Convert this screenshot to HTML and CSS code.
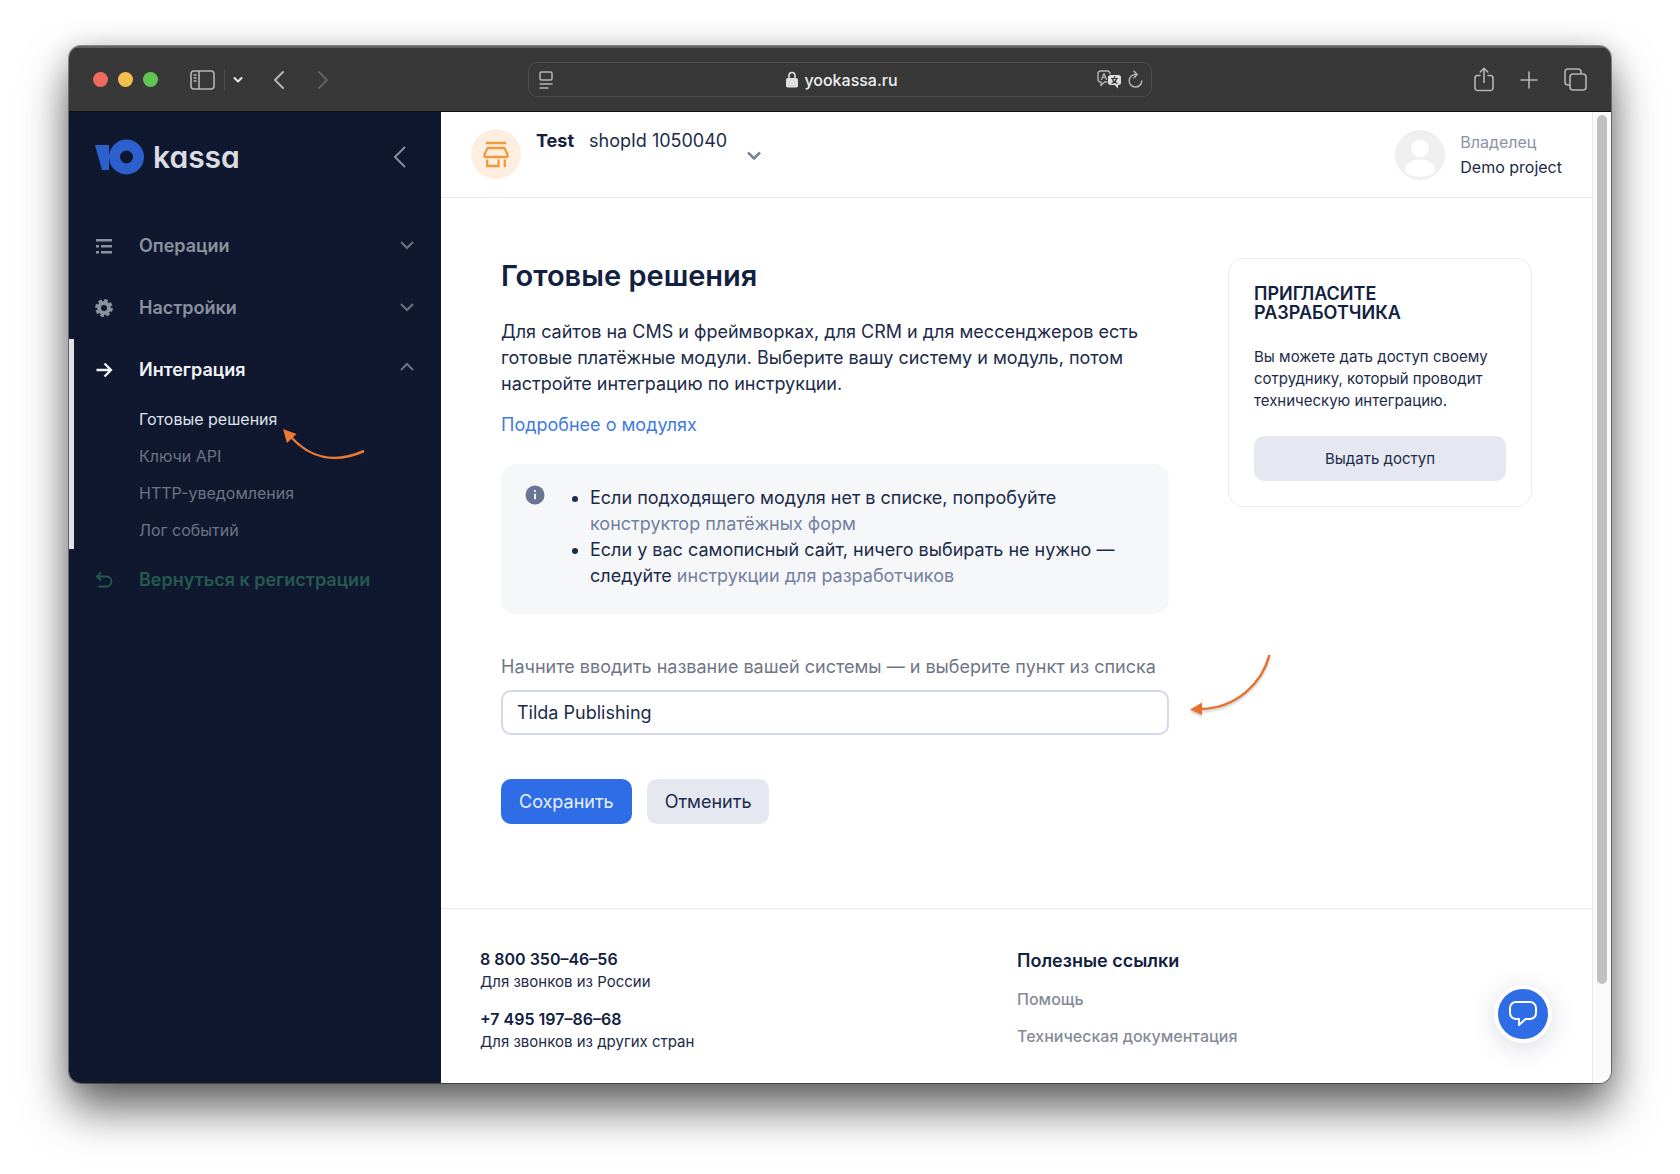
FILE: index.html
```html
<!DOCTYPE html>
<html lang="ru">
<head>
<meta charset="UTF-8">
<meta name="viewport" content="width=device-width, initial-scale=1.0">
<title>Готовые решения</title>
<link rel="stylesheet" href="styles.css">
</head>
<body>
    <div class="window">
        <!-- Панель браузера -->
        <div class="toolbar">
            <div class="toolbar-left">
                <span class="light red"></span>
                <span class="light yellow"></span>
                <span class="light green"></span>
                <button class="tool sidebar-btn" aria-label="Боковая панель">
                    <svg width="26" height="20" viewBox="0 0 26 20" fill="none" stroke="currentColor" stroke-width="1.6">
                        <rect x="1" y="1" width="23" height="18" rx="3"/>
                        <path d="M9 1v18"/>
                        <path d="M3.500 5h3M3.500 8h3M3.500 11h3" stroke-width="1.300"/>
                    </svg>
                </button>
                <span class="divider"></span>
                <button class="tool menu-btn" aria-label="Меню">
                    <svg width="10" height="8" viewBox="0 0 10 8" fill="none" stroke="#e8e8e8" stroke-width="2" stroke-linecap="round" stroke-linejoin="round"><path d="M1.500 2l3.500 3.500L8.500 2"/></svg>
                </button>
                <button class="tool back-btn" aria-label="Назад">
                    <svg width="12" height="20" viewBox="0 0 12 20" fill="none" stroke="currentColor" stroke-width="2" stroke-linecap="round" stroke-linejoin="round"><path d="M10 2L2 10l8 8"/></svg>
                </button>
                <button class="tool forward-btn" aria-label="Вперёд">
                    <svg width="12" height="20" viewBox="0 0 12 20" fill="none" stroke="#636363" stroke-width="2" stroke-linecap="round" stroke-linejoin="round"><path d="M2 2l8 8-8 8"/></svg>
                </button>
            </div>
            <div class="address">
                <button class="tool" aria-label="Режим чтения">
                    <svg width="14" height="18" viewBox="0 0 14 18" fill="none" stroke="currentColor" stroke-width="1.500" stroke-linecap="round"><rect x="1" y="1" width="12" height="8" rx="1.500"/><path d="M1 13h12M1 17h8"/></svg>
                </button>
                <span class="address-url">
                    <svg width="12" height="17" viewBox="0 0 12 17"><path d="M3 8V4.500a3 3 0 0 1 6 0V8" fill="none" stroke="#dedede" stroke-width="1.600"/><rect y="7" width="12" height="9.500" rx="1.800" fill="#dedede"/></svg>
                    yookassa.ru
                </span>
                <span class="address-tools">
                    <button class="tool" aria-label="Перевести">
                        <svg width="25" height="19" viewBox="0 0 25 19" fill="none" stroke="currentColor" stroke-linecap="round" stroke-linejoin="round">
                            <path d="M10 12H7.500L4 15.500V12H3.500A2.500 2.500 0 0 1 1 9.500v-6A2.500 2.500 0 0 1 3.500 1h7A2.500 2.500 0 0 1 13 3.500" stroke-width="1.400"/>
                            <path d="M4.500 9.500L7 3.500l2.500 6M5.500 7.500h3" stroke-width="1.200"/>
                            <path d="M13.500 5h8A2.500 2.500 0 0 1 24 7.500v5a2.500 2.500 0 0 1-2.500 2.500H21v3.500L17.500 15h-4a2.500 2.500 0 0 1-2.500-2.500v-5A2.500 2.500 0 0 1 13.500 5z" fill="#dcdcdc" stroke="none"/>
                            <path d="M17.500 6.500v1.500M14.500 8.500h6M15.500 9c.5 2 2 3.500 4.500 4.300M19.500 9c-.5 2-2 3.500-4.500 4.300" stroke="#383838" stroke-width="1.200"/>
                        </svg>
                    </button>
                    <button class="tool" aria-label="Обновить">
                        <svg width="15" height="19" viewBox="0 0 15 19" fill="none" stroke="currentColor" stroke-width="1.500" stroke-linecap="round" stroke-linejoin="round"><path d="M8 4.500A6.300 6.300 0 1 0 13.800 11"/><path d="M6 1.200l3.200 3.300L6 7.700"/></svg>
                    </button>
                </span>
            </div>
            <div class="toolbar-right">
                <button class="tool" aria-label="Поделиться">
                    <svg width="20" height="25" viewBox="0 0 20 25" fill="none" stroke="currentColor" stroke-width="1.600" stroke-linecap="round" stroke-linejoin="round"><path d="M6 8.500H3.500A2.500 2.500 0 0 0 1 11v10a2.500 2.500 0 0 0 2.500 2.500h13A2.500 2.500 0 0 0 19 21V11a2.500 2.500 0 0 0-2.500-2.500H14"/><path d="M10 15.500V1.500M6.300 5L10 1.300 13.700 5"/></svg>
                </button>
                <button class="tool" aria-label="Новая вкладка">
                    <svg width="18" height="18" viewBox="0 0 18 18" stroke="currentColor" stroke-width="1.600" stroke-linecap="round"><path d="M9 1v16M1 9h16"/></svg>
                </button>
                <button class="tool" aria-label="Все вкладки">
                    <svg width="23" height="23" viewBox="0 0 23 23" fill="none" stroke="currentColor" stroke-width="1.600"><rect x="6" y="6" width="16" height="16" rx="3"/><path d="M6 17H4a3 3 0 0 1-3-3V4a3 3 0 0 1 3-3h10a3 3 0 0 1 3 3v2"/></svg>
                </button>
            </div>
        </div>

        <div class="page">
            <!-- Боковое меню -->
            <aside class="sidebar">
                <div class="sidebar-top">
                    <a class="logo" href="#">
                        <svg width="50" height="36" viewBox="0 0 50 36"><path d="M0 6h14v25H7z" fill="#2d60cf"/><circle cx="31.500" cy="18" r="12" fill="none" stroke="#2d60cf" stroke-width="11"/></svg>
                        <span>kassa</span>
                    </a>
                    <button class="collapse" aria-label="Свернуть меню">
                        <svg width="14" height="22" viewBox="0 0 14 22" fill="none" stroke="#878d9c" stroke-width="2"><path d="M12 1L2 11l10 10"/></svg>
                    </button>
                </div>
                <nav class="nav">
                    <a class="nav-item" href="#">
                        <svg width="18" height="18" viewBox="0 0 18 18" fill="#8b919f"><path d="M1 2h16v2.500H1zM6 8h11v2.500H6zM6 14h11v2.500H6zM1 8h3v2.500H1zM1 14h3v2.500H1z"/></svg>
                        <span>Операции</span>
                        <svg class="chevron" width="16" height="10" viewBox="0 0 16 10"><path d="M2 1l6 6 6-6"/></svg>
                    </a>
                    <a class="nav-item" href="#">
                        <svg width="18" height="18" viewBox="0 0 18 18"><circle cx="9" cy="9" r="5" fill="none" stroke="#8b919f" stroke-width="4"/><circle cx="9" cy="9" r="7.300" fill="none" stroke="#8b919f" stroke-width="3.200" stroke-dasharray="3.400 2.333"/></svg>
                        <span>Настройки</span>
                        <svg class="chevron" width="16" height="10" viewBox="0 0 16 10"><path d="M2 1l6 6 6-6"/></svg>
                    </a>
                    <div class="nav-group">
                        <a class="nav-item active" href="#">
                            <svg width="18" height="18" viewBox="0 0 18 18" fill="none" stroke="#f2f3f5" stroke-width="2.300"><path d="M1.500 9h14M9.500 2.500L16 9l-6.500 6.500"/></svg>
                            <span>Интеграция</span>
                            <svg class="chevron" width="16" height="16" viewBox="0 0 16 16"><path d="M2 8l6-6 6 6"/></svg>
                        </a>
                        <div class="subnav">
                            <a class="current" href="#">Готовые решения</a>
                            <a href="#">Ключи API</a>
                            <a href="#">HTTP-уведомления</a>
                            <a href="#">Лог событий</a>
                        </div>
                    </div>
                    <a class="nav-item return" href="#">
                        <svg width="18" height="18" viewBox="0 0 18 18" fill="none" stroke="#255a50" stroke-width="1.800"><path d="M6 1.500L2 5.500l4 4M2 5.500h9.500a5 5 0 0 1 0 10H3.500"/></svg>
                        <span>Вернуться к регистрации</span>
                    </a>
                </nav>
                <svg class="arrow arrow-menu" width="84" height="34" viewBox="0 0 84 34"><path d="M8 8C27 29 52 35 81 22" fill="none" stroke="#ec7a31" stroke-width="2.500"/><path d="M0 0l13.500 5L4 14z" fill="#ec7a31"/></svg>
            </aside>

            <div class="content">
                <header class="header">
                    <button class="shop">
                        <svg class="shop-icon" width="50" height="50" viewBox="0 0 50 50">
                            <circle cx="25" cy="25" r="25" fill="#fdeedf"/>
                            <g fill="none" stroke="#eb9b3e" stroke-width="2.300"><path d="M15 14h20"/><path d="M16.500 19h17l3 6.500v2.500h-23v-2.500z" stroke-linejoin="round"/><path d="M16.200 30.500v6.500h11.300v-6.500M33.800 30.500V38"/></g>
                        </svg>
                        <span class="shop-name"><b>Test</b><span>shopId 1050040</span></span>
                        <svg class="chevron" width="16" height="10" viewBox="0 0 16 10"><path d="M2 1.500l6 6 6-6"/></svg>
                    </button>
                    <div class="user">
                        <svg width="50" height="50" viewBox="0 0 50 50"><circle cx="25" cy="25" r="25" fill="#efefef"/><circle cx="25" cy="18.500" r="9" fill="#fff"/><path d="M9.500 42c0-7 5-12.500 15.500-12.500S40.500 35 40.500 42c-9 6.500-22 6.500-31 0z" fill="#fff"/></svg>
                        <div>
                            <div class="role">Владелец</div>
                            <div>Demo project</div>
                        </div>
                    </div>
                </header>

                <div class="columns">
                    <main class="main">
                        <h1>Готовые решения</h1>
                        <p class="intro">Для сайтов на CMS и фреймворках, для CRM и для мессенджеров есть готовые платёжные модули. Выберите вашу систему и модуль, потом настройте интеграцию по инструкции.</p>
                        <a class="more" href="#">Подробнее о модулях</a>

                        <div class="notice">
                            <svg width="20" height="20" viewBox="0 0 20 20"><circle cx="10" cy="10" r="9.500" fill="#6b7694"/><path d="M10 8.800v5.400" stroke="#fff" stroke-width="1.800"/><circle cx="10" cy="6" r="1.100" fill="#fff"/></svg>
                            <ul>
                                <li>Если подходящего модуля нет в списке, попробуйте <a href="#">конструктор платёжных форм</a></li>
                                <li>Если у вас самописный сайт, ничего выбирать не нужно — следуйте <a href="#">инструкции для разработчиков</a></li>
                            </ul>
                        </div>

                        <form class="form">
                            <label for="system">Начните вводить название вашей системы — и выберите пункт из списка</label>
                            <div class="field">
                                <input id="system" type="text" value="Tilda Publishing">
                                <svg class="arrow arrow-field" width="84" height="64" viewBox="0 0 84 64"><path d="M79.500 2C72 30 47 55 11 56" fill="none" stroke="#e8712d" stroke-width="2.500"/><path d="M0 56.500l12-7v12.500z" fill="#e8712d"/></svg>
                            </div>
                            <div class="buttons">
                                <button type="button" class="btn primary">Сохранить</button>
                                <button type="button" class="btn">Отменить</button>
                            </div>
                        </form>
                    </main>

                    <section class="card">
                        <h2>Пригласите разработчика</h2>
                        <p>Вы можете дать доступ своему сотруднику, который проводит техническую интеграцию.</p>
                        <button class="btn">Выдать доступ</button>
                    </section>
                </div>

                <footer class="footer">
                    <div class="phones">
                        <p><b>8 800 350–46–56</b><br>Для звонков из России</p>
                        <p><b>+7 495 197–86–68</b><br>Для звонков из других стран</p>
                    </div>
                    <div class="links">
                        <h3>Полезные ссылки</h3>
                        <a href="#">Помощь</a>
                        <a href="#">Техническая документация</a>
                    </div>
                </footer>
                <button class="chat" aria-label="Чат">
                    <svg width="30" height="28" viewBox="0 0 30 28" fill="none" stroke="#fff" stroke-width="2" stroke-linejoin="round"><path d="M8 2h14a6 6 0 0 1 6 6v5a6 6 0 0 1-6 6h-4.500L11 25v-6H8a6 6 0 0 1-6-6V8a6 6 0 0 1 6-6z"/></svg>
                </button>
            </div>

            <div class="scrollbar"><div class="thumb"></div></div>
        </div>
    </div>
</body>
</html>
```
FILE: styles.css
```css
* {
    box-sizing: border-box;
}
body {
    margin: 0;
    padding: 46px 69px 91px;
    min-height: 100vh;
    display: flex;
    background: #fff;
    font-family: Inter, "Open Sans", sans-serif;
    font-size: 18px;
    line-height: 26px;
    color: #1c2b4a;
}
button, input {
    font: inherit;
    color: inherit;
}
button {
    padding: 0;
    border: none;
    background: none;
    cursor: pointer;
}
a {
    color: inherit;
    text-decoration: none;
}
svg {
    display: block;
    flex: none;
}
h1, h2, h3, p, ul {
    margin: 0;
}

/* Окно браузера */
.window {
    flex: 1;
    display: flex;
    flex-direction: column;
    border-radius: 12px;
    overflow: hidden;
    box-shadow: 0 0 0 1px rgba(0, 0, 0, 0.4), 0 26px 46px rgba(0, 0, 0, 0.6), 0 0 28px rgba(0, 0, 0, 0.15);
}
.toolbar {
    height: 66px;
    display: grid;
    grid-template-columns: 1fr minmax(auto, 624px) 1fr;
    align-items: center;
    padding: 0 24px;
    background: #383838;
    border-top: 2px solid #606161;
    border-bottom: 1px solid #111;
    color: #b5b5b5;
}
.toolbar-left {
    display: flex;
    align-items: center;
    gap: 10px;
}
.light {
    width: 15px;
    height: 15px;
    border-radius: 50%;
}
.red {
    background: #ed6a5e;
}
.yellow {
    background: #f5bf4f;
}
.green {
    background: #61c554;
}
.sidebar-btn {
    margin-left: 22px;
}
.divider {
    width: 1px;
    height: 22px;
    margin: 0 -2px;
    background: #4b4b4b;
}
.back-btn {
    margin-left: 20px;
}
.forward-btn {
    margin-left: 22px;
}
.address {
    display: flex;
    align-items: center;
    justify-content: space-between;
    height: 35px;
    padding: 0 8px 0 10px;
    border: 1px solid #4d4d4d;
    border-radius: 9px;
}
.address-url {
    display: flex;
    align-items: center;
    gap: 6px;
    margin-left: 34px;
    font-size: 16px;
    font-weight: 500;
    color: #f0f0f0;
}
.address-tools {
    display: flex;
    gap: 6px;
}
.toolbar-right {
    display: flex;
    align-items: center;
    justify-content: flex-end;
    gap: 26px;
}
.page {
    flex: 1;
    display: flex;
}

/* Боковое меню */
.sidebar {
    position: relative;
    width: 372px;
    flex: none;
    background: #10182f;
}
.sidebar-top {
    display: flex;
    align-items: center;
    justify-content: space-between;
    height: 90px;
    padding: 0 34px 0 26px;
}
.logo {
    display: flex;
    align-items: center;
    gap: 8px;
    font-size: 30px;
    font-weight: 600;
    color: #dadde2;
    font-feature-settings: "cv11"; /* круглая буква a */
}
.nav {
    padding-top: 13px;
}
.nav-item {
    display: flex;
    align-items: center;
    height: 62px;
    padding: 0 26px;
    font-weight: 600;
    color: #8b919f;
}
.nav-item span {
    flex: 1;
    margin-left: 26px;
}
.chevron {
    fill: none;
    stroke: #6b7283;
    stroke-width: 2;
}
.nav-group {
    border-left: 5px solid #e2e2e4;
}
.nav-group .nav-item {
    padding-left: 21px;
}
.nav-item.active {
    color: #f2f3f5;
}
.subnav {
    display: flex;
    flex-direction: column;
    padding-left: 65px;
    font-size: 16px;
    line-height: 37px;
    color: #6d7485;
}
.subnav .current {
    color: #dfe2e8;
}
.nav-item.return {
    color: #255a50;
}

/* Стрелки-подсказки */
.arrow {
    position: absolute;
}
.arrow-menu {
    left: 214px;
    top: 317px;
}
.arrow-field {
    left: calc(100% + 21px);
    bottom: 18px;
    filter: drop-shadow(0 2px 1px rgba(0, 0, 0, 0.2));
}

/* Содержимое */
.content {
    position: relative;
    flex: 1;
    background: #fff;
}
.header {
    display: flex;
    align-items: center;
    justify-content: space-between;
    height: 86px;
    padding: 0 30px;
    border-bottom: 1px solid #e6e7ea;
}
.shop {
    display: flex;
    align-items: center;
    gap: 15px;
    padding-bottom: 2px;
}
.shop-name {
    display: flex;
    gap: 15px;
    padding-bottom: 26px;
}
.shop-name b {
    font-weight: 700;
    color: #12213f;
}
.shop .chevron {
    margin: 5px 0 0 4px;
    stroke: #7b8297;
    stroke-width: 2.5;
}
.user {
    display: flex;
    align-items: center;
    gap: 15px;
    font-size: 16px;
    line-height: 25px;
}
.role {
    color: #8c92a3;
}
.columns {
    display: flex;
    align-items: flex-start;
    gap: 59px;
    padding: 60px 60px 84px;
}
.main {
    flex: 1;
}
h1 {
    font-size: 29px;
    line-height: 36px;
    font-weight: 600;
    color: #12213f;
}
.intro {
    margin-top: 25px;
}
.more {
    display: block;
    margin-top: 15px;
    color: #3f7be0;
}
.notice {
    display: flex;
    align-items: flex-start;
    gap: 25px;
    margin-top: 26px;
    padding: 21px 24px 25px;
    border-radius: 15px;
    background: #f5f7f9;
}
.notice ul {
    padding-left: 20px;
}
.notice a {
    color: #7480a0;
}
.form label {
    display: block;
    margin-top: 40px;
    color: #6f7688;
}
.field {
    position: relative;
    margin-top: 10px;
}
.field input {
    display: block;
    width: 100%;
    height: 45px;
    padding: 0 14px;
    border: 2px solid #d3d9e8;
    border-radius: 10px;
    outline: none;
    background: #fff;
}
.buttons {
    display: flex;
    gap: 15px;
    margin-top: 44px;
}
.btn {
    height: 45px;
    padding: 0 18px;
    border-radius: 10px;
    background: #e5e8f1;
}
.btn.primary {
    background: #2f6de6;
    color: #e8f0ff;
}

/* Карточка разработчика */
.card {
    width: 304px;
    padding: 25px;
    border: 1px solid #e9edf0;
    border-radius: 15px;
    font-size: 15px;
    line-height: 22px;
}
h2 {
    font-size: 18px;
    line-height: 19px;
    font-weight: 600;
    text-transform: uppercase;
    color: #12213f;
}
.card p {
    margin: 24px 0;
}
.card .btn {
    width: 100%;
}

/* Подвал */
.footer {
    display: grid;
    grid-template-columns: 1fr 1fr;
    padding: 39px 38px 0 39px;
    border-top: 1px solid #e6e7ea;
    font-size: 16px;
}
.phones {
    font-size: 15px;
}
.phones p {
    line-height: 22px;
    margin-bottom: 15px;
}
.footer b {
    font-size: 16px;
    font-weight: 600;
    color: #12213f;
}
h3 {
    font-size: 18px;
    line-height: 26px;
    font-weight: 600;
    color: #12213f;
}
.links a {
    display: block;
    margin-top: 13px;
    line-height: 24px;
    font-weight: 500;
    color: #858b98;
}
.chat {
    position: absolute;
    right: 40px;
    bottom: 40px;
    display: flex;
    align-items: center;
    justify-content: center;
    width: 58px;
    height: 58px;
    border: 4px solid #fff;
    border-radius: 50%;
    background: #2f6de6;
    box-shadow: 0 5px 26px rgba(30, 40, 80, 0.16);
}

.scrollbar {
    width: 19px;
    padding: 3px 4px;
    background: #fafafa;
    border-left: 1px solid #e8e8e8;
}
.thumb {
    width: 10px;
    height: 90%;
    border-radius: 5px;
    background: #c1c1c1;
}
```
